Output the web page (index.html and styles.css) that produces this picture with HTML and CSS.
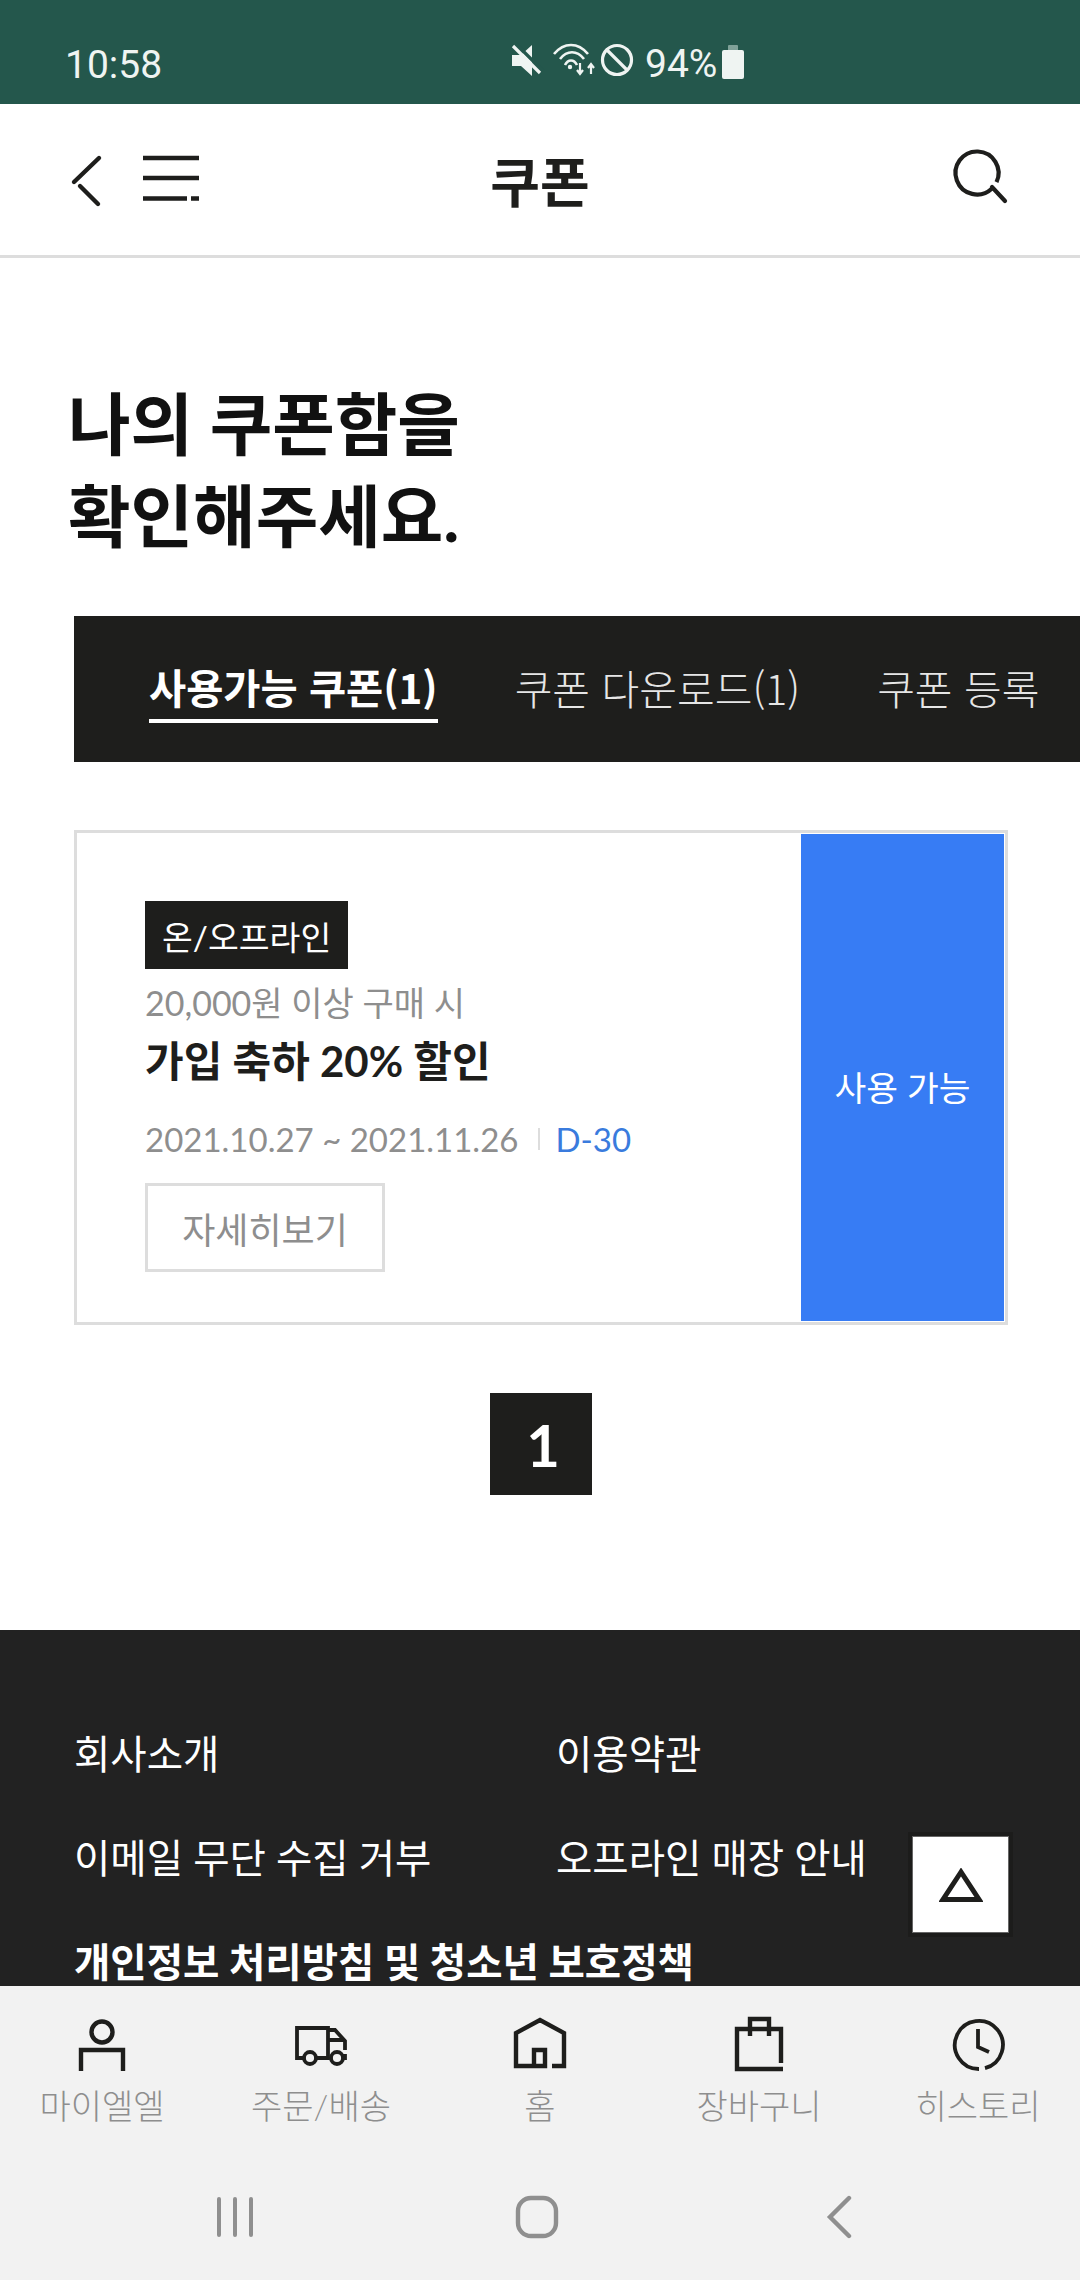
FILE: index.html
```html
<!DOCTYPE html>
<html lang="ko">
<head>
<meta charset="utf-8">
<title>쿠폰</title>
<link rel="stylesheet" href="styles.css">
</head>
<body>
<div class="phone">
  <div class="status">
    <span class="time">10:58</span>
    <div class="status-right">
      <svg class="ic-status" width="196" height="44" viewBox="510 42 196 44" fill="none">
        <path d="M512 57h9l11-10v31l-11-10h-9z" fill="#eff4f2"/>
        <path d="M515 45l28 28" stroke="#24574c" stroke-width="3.4"/>
        <path d="M513 48l27 27" stroke="#eff4f2" stroke-width="3.2"/>
        <path d="M554 56c10-12 24-12 34 0M560 61c7-9 17-9 24 0M565 67c3-6 9-6 12 0" stroke="#eff4f2" stroke-width="2.6"/>
        <circle cx="570" cy="69" r="2.2" fill="#eff4f2"/>
        <path d="M580 65v10M577 72l3 4 3-4M591 76v-9M588 70l3-4 3 4" stroke="#eff4f2" stroke-width="2.2"/>
        <circle cx="617" cy="62" r="14.5" stroke="#eff4f2" stroke-width="3.2"/>
        <path d="M607 52l20 20" stroke="#eff4f2" stroke-width="3.2"/>
      </svg>
      <span class="pct">94%</span>
      <svg class="ic-batt" width="22" height="34" viewBox="0 0 22 34">
        <rect x="6" y="0" width="10" height="7" rx="1" fill="#7fa198"/>
        <rect x="0" y="5" width="22" height="29" rx="2" fill="#eff4f2"/>
      </svg>
    </div>
  </div>

  <header class="topbar">
    <svg class="topbar-icons" width="160" height="60" viewBox="70 150 160 60" fill="none" stroke="#1e1e1c">
      <path d="M99 158L74 182M80 186l18 18" stroke-width="4.4" stroke-linecap="round"/>
      <path d="M143 158h56M143 178h56M143 198.5h44M191 198.5h8" stroke-width="4.4"/>
    </svg>
    <h1 class="title">쿠폰</h1>
    <svg class="search" width="60" height="60" viewBox="950 146 60 60" fill="none" stroke="#1e1e1c" stroke-width="4.2">
      <path d="M996.5 182.1A21.5 21.5 0 1 0 991.7 188.7"/>
      <path d="M992 187l13 14" stroke-linecap="round"/>
    </svg>
  </header>

  <main class="content">
    <h2 class="heading">나의 쿠폰함을<br>확인해주세요.</h2>

    <nav class="tabs">
      <a class="tab tab-active">사용가능 쿠폰(1)</a>
      <a class="tab">쿠폰 다운로드(1)</a>
      <a class="tab">쿠폰 등록</a>
    </nav>

    <section class="card">
      <div class="card-body">
        <span class="badge">온/오프라인</span>
        <p class="cond">20,000원 이상 구매 시</p>
        <p class="name">가입 축하 20% 할인</p>
        <p class="period"><span>2021.10.27 ~ 2021.11.26</span><i class="sep"></i><span class="dday">D-30</span></p>
        <a class="more">자세히보기</a>
      </div>
      <div class="card-state">사용 가능</div>
    </section>

    <div class="pager"><span class="page">1</span></div>

    <footer class="footer">
      <a>회사소개</a><a>이용약관</a>
      <a>이메일 무단 수집 거부</a><a>오프라인 매장 안내</a>
      <a class="strong">개인정보 처리방침 및 청소년 보호정책</a>
    </footer>

    <button class="to-top" type="button" aria-label="맨 위로">
      <svg width="44" height="34" viewBox="0 0 44 34" fill="none"><path d="M22 4L4 31.5h36z" stroke="#1e1e1c" stroke-width="5"/></svg>
    </button>
  </main>

  <nav class="tabbar">
    <a class="tb-item">
      <svg class="tb-icon" width="60" height="60" viewBox="0 0 60 60" fill="none" stroke="#1e1e1c" stroke-width="4.4">
        <circle cx="30" cy="17" r="10.5"/><path d="M9 56V35h42v21"/>
      </svg>
      <span>마이엘엘</span>
    </a>
    <a class="tb-item">
      <svg class="tb-icon" width="60" height="60" viewBox="0 0 60 60" fill="none" stroke="#1e1e1c" stroke-width="3.8">
        <path d="M13 43H6V13h31v30H25M37 15h7l10 11v9M37 25h16M53 43h1v-4"/>
        <circle cx="19" cy="43" r="6"/><circle cx="46" cy="43" r="6"/>
      </svg>
      <span>주문/배송</span>
    </a>
    <a class="tb-item">
      <svg class="tb-icon" width="60" height="60" viewBox="0 0 60 60" fill="none" stroke="#1e1e1c" stroke-width="4.4">
        <path d="M42 51h12V18L30 5 6 18v33h29V35H24v16"/>
      </svg>
      <span>홈</span>
    </a>
    <a class="tb-item">
      <svg class="tb-icon" width="60" height="60" viewBox="0 0 60 60" fill="none" stroke="#1e1e1c" stroke-width="4.4">
        <path d="M52 48V14H8v40h46"/><path d="M21 21V4h19v17"/>
      </svg>
      <span>장바구니</span>
    </a>
    <a class="tb-item">
      <svg class="tb-icon" width="60" height="60" viewBox="0 0 60 60" fill="none" stroke="#1e1e1c" stroke-width="3.8">
        <path d="M31 54A24 24 0 1 1 37 53.2"/><path d="M30 14v18l11 5"/>
      </svg>
      <span>히스토리</span>
    </a>
  </nav>

  <div class="sysnav">
    <svg width="38" height="42" viewBox="0 0 38 42" fill="none" stroke="#8f8f8f" stroke-width="4" stroke-linecap="round"><path d="M3 3v36M19 3v36M35 3v36"/></svg>
    <svg width="44" height="44" viewBox="0 0 44 44" fill="none" stroke="#8f8f8f" stroke-width="4.4"><rect x="3" y="3" width="38" height="38" rx="13"/></svg>
    <svg width="26" height="44" viewBox="0 0 26 44" fill="none" stroke="#8f8f8f" stroke-width="4.4" stroke-linecap="round"><path d="M23 3L4 22l19 19"/></svg>
  </div>
</div>
</body>
</html>
```

FILE: styles.css
```css
* { box-sizing: border-box; }
html, body { margin: 0; padding: 0; }
body {
  font-family: Lato, "Noto Sans CJK KR", sans-serif;
  color: #1e1e1c;
  background: #fff;
}
p, h1, h2 { margin: 0; }

.phone {
  width: 1080px;
  height: 2280px;
  display: flex;
  flex-direction: column;
  overflow: hidden;
}

/* status bar */
.status {
  height: 104px;
  flex: none;
  background: #24574c;
  color: #eff4f2;
  display: flex;
  align-items: center;
  padding: 24px 0 0 65px;
  font-family: Roboto, sans-serif;
}
.time { font-size: 39px; width: 445px; margin-top: 2px; }
.status-right { display: flex; align-items: center; }
.ic-status { display: block; margin-top: -4px; }
.pct { font-size: 39px; margin-left: -61px; width: 78px; }
.ic-batt { display: block; margin-top: -4px; margin-left: -1px; }

/* header */
.topbar {
  height: 154px;
  flex: none;
  border-bottom: 3px solid #ddd;
  display: flex;
  align-items: center;
  justify-content: space-between;
  padding: 0 70px;
}
.title {
  font-size: 54px;
  font-weight: 700;
  flex: 1;
  text-align: center;
}
.topbar-icons { display: block; margin-top: 1px; }
.search { display: block; margin-top: -7px; margin-left: 100px; }

/* content */
.content {
  flex: none;
  height: 1728px;
  overflow: hidden;
  position: relative;
}
.heading {
  font-size: 68px;
  line-height: 92px;
  font-weight: 700;
  color: #111;
  padding: 120px 0 0 68px;
}
.tabs {
  margin: 54px 0 0 74px;
  height: 146px;
  background: #1e1e1c;
  display: flex;
  align-items: center;
  padding-left: 75px;
  gap: 77px;
  white-space: nowrap;
  font-family: "Noto Sans CJK KR", sans-serif;
}
.tab {
  font-size: 41px;
  font-weight: 300;
  color: #e6e6e6;
  line-height: 52px;
  padding-bottom: 6px;
  border-bottom: 4px solid transparent;
  margin-top: 5px;
}
.tab-active {
  font-size: 40.4px;
  color: #fff;
  font-weight: 700;
  border-bottom-color: #fff;
}

.card {
  margin: 68px 72px 0 74px;
  height: 495px;
  border: 3px solid #ddd;
  display: flex;
}
.card-body {
  flex: 1;
  padding: 68px 0 0 68px;
  display: flex;
  flex-direction: column;
  align-items: flex-start;
}
.badge {
  height: 68px;
  padding: 0 17px;
  background: #1e1e1c;
  color: #fff;
  font-size: 33.5px;
  font-weight: 400;
  display: flex;
  align-items: center;
}
.cond {
  margin-top: 9px;
  font-size: 34px;
  line-height: 50px;
  color: #8e8e8e;
  font-weight: 400;
}
.name {
  margin-top: 5px;
  font-size: 42px;
  line-height: 56px;
  font-weight: 700;
}
.period {
  margin-top: 25px;
  font-size: 33px;
  line-height: 50px;
  color: #8e8e8e;
  display: flex;
  align-items: center;
}
.sep {
  width: 2px;
  height: 22px;
  background: #ddd;
  margin: 0 17px 0 20px;
}
.dday { color: #3a7bdd; margin-left: -2px; }
.more {
  margin-top: 19px;
  width: 240px;
  height: 89px;
  border: 3px solid #ddd;
  color: #8e8e8e;
  font-size: 36px;
  font-weight: 400;
  display: flex;
  align-items: center;
  justify-content: center;
}
.card-state {
  width: 203px;
  margin: 1px;
  padding-top: 16px;
  background: #377cf4;
  color: #fff;
  font-size: 34.5px;
  font-weight: 400;
  display: flex;
  align-items: center;
  justify-content: center;
}

.pager {
  margin: 68px 0 0 2px;
  display: flex;
  justify-content: center;
}
.page {
  width: 102px;
  height: 102px;
  background: #1e1e1c;
  color: #fff;
  font-size: 58px;
  font-weight: 700;
  display: flex;
  align-items: center;
  justify-content: center;
  padding-left: 4px;
}

.footer {
  margin-top: 135px;
  height: 400px;
  background: #222;
  color: #fff;
  padding: 71px 0 0 74px;
  display: grid;
  grid-template-columns: 482px 1fr;
  grid-auto-rows: 104px;
  font-size: 39.5px;
  font-weight: 400;
  line-height: 104px;
  align-items: start;
}
.footer a { height: 104px; margin-top: 1px; white-space: nowrap; }
.strong { grid-column: 1 / 3; font-weight: 700; }

.to-top {
  position: absolute;
  left: 908px;
  top: 1574px;
  width: 105px;
  height: 105px;
  padding: 0;
  background: #fff;
  border: 4px solid #1c1c1b;
  box-shadow: inset 0 0 0 1px #666;
  outline: none;
  display: flex;
  align-items: center;
  justify-content: center;
}

/* tab bar */
.tabbar {
  flex: none;
  height: 168px;
  background: #f2f2f2;
  display: flex;
  justify-content: center;
}
.tb-item {
  flex: none;
  width: 219px;
  display: flex;
  flex-direction: column;
  align-items: center;
  padding-top: 29px;
  font-size: 34px;
  font-weight: 300;
  color: #8e8e8e;
}
.tb-icon { display: block; flex: none; }
.tb-item span { line-height: 48px; margin-top: 7px; white-space: nowrap; }

/* system nav */
.sysnav {
  flex: none;
  height: 126px;
  background: #f2f2f2;
  display: grid;
  grid-template-columns: repeat(3, 302px);
  justify-items: center;
  align-items: center;
  padding-left: 84px;
}
.sysnav svg { display: block; }
```
